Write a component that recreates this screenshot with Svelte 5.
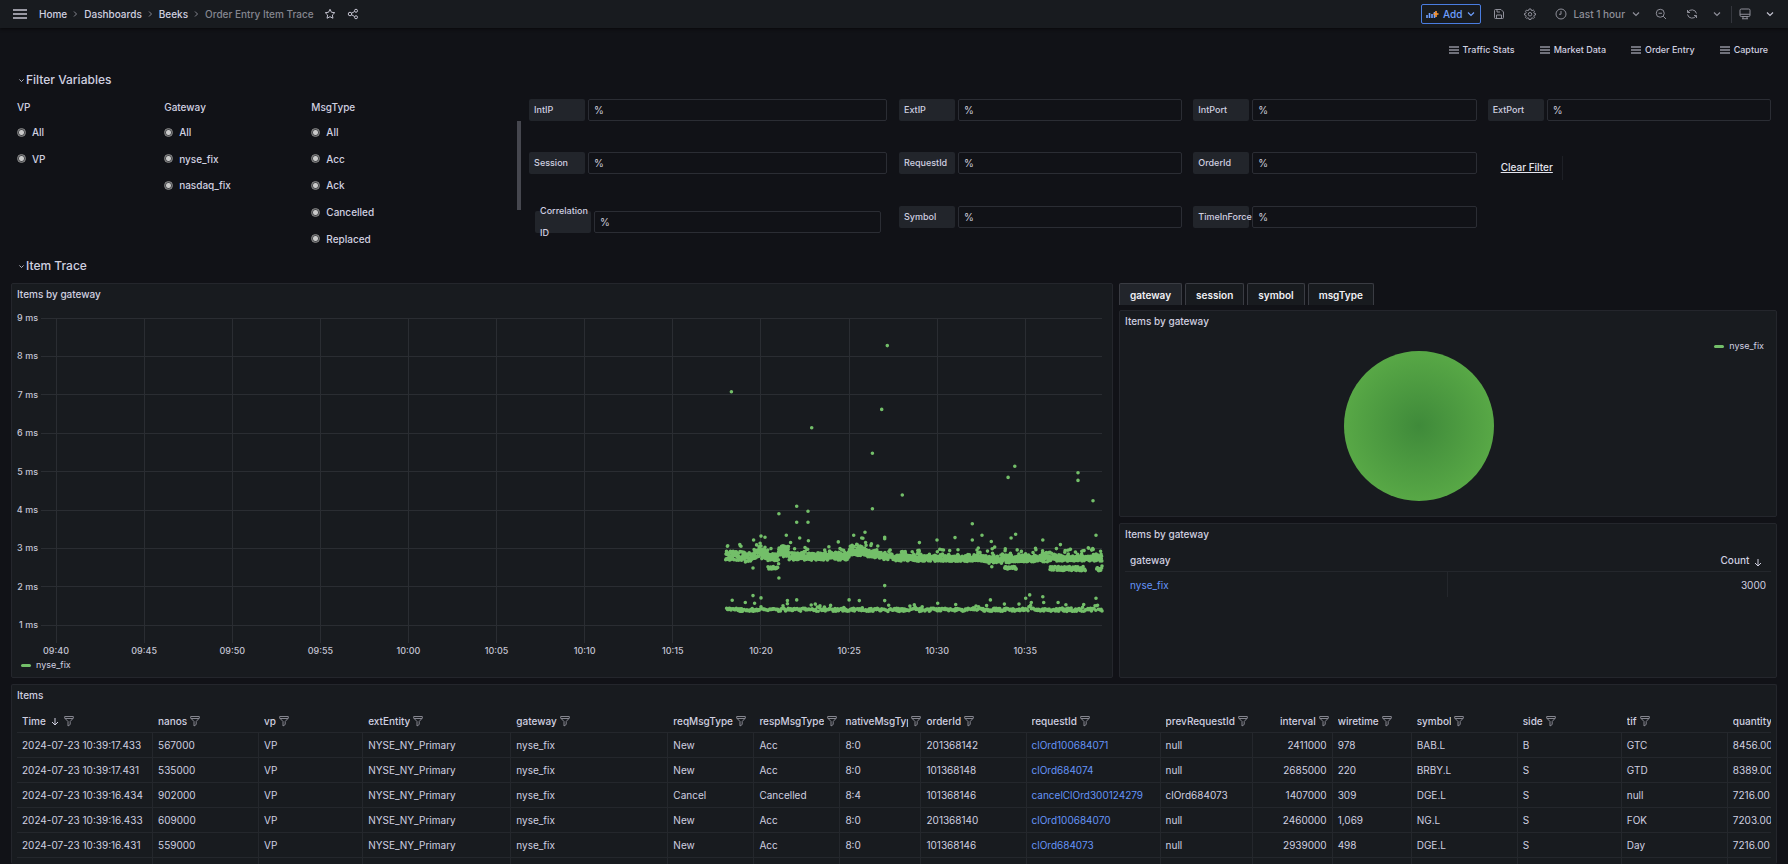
<script lang="ts">
  type Band = [from: number, to: number, low: number, high: number];
  type Point = [minute: number, ms: number];

  const crumbs = ['Home', 'Dashboards', 'Beeks'];
  const links = ['Traffic Stats', 'Market Data', 'Order Entry', 'Capture'];

  const radioGroups = [
    { title: 'VP', options: ['All', 'VP'] },
    { title: 'Gateway', options: ['All', 'nyse_fix', 'nasdaq_fix'] },
    { title: 'MsgType', options: ['All', 'Acc', 'Ack', 'Cancelled', 'Replaced'] }
  ];

  const fields = [
    'IntIP', 'ExtIP', 'IntPort', 'ExtPort',
    'Session', 'RequestId', 'OrderId', null,
    'Correlation ID', 'Symbol', 'TimeInForce'
  ];

  const tabs = ['gateway', 'session', 'symbol', 'msgType'];
  let activeTab = $state('gateway');

  const columns = [
    { name: 'Time', width: 136, sorted: true },
    { name: 'nanos', width: 106 },
    { name: 'vp', width: 104 },
    { name: 'extEntity', width: 148 },
    { name: 'gateway', width: 157 },
    { name: 'reqMsgType', width: 86 },
    { name: 'respMsgType', width: 86 },
    { name: 'nativeMsgType', width: 81 },
    { name: 'orderId', width: 105 },
    { name: 'requestId', width: 134, link: true },
    { name: 'prevRequestId', width: 92 },
    { name: 'interval', width: 80, right: true },
    { name: 'wiretime', width: 79 },
    { name: 'symbol', width: 106 },
    { name: 'side', width: 104 },
    { name: 'tif', width: 106 },
    { name: 'quantity', width: 43 }
  ];
  const totalWidth = columns.reduce((sum, c) => sum + c.width, 0);

  const rows = [
    ['2024-07-23 10:39:17.433', '567000', 'VP', 'NYSE_NY_Primary', 'nyse_fix', 'New', 'Acc', '8:0', '201368142', 'clOrd100684071', 'null', '2411000', '978', 'BAB.L', 'B', 'GTC', '8456.00'],
    ['2024-07-23 10:39:17.431', '535000', 'VP', 'NYSE_NY_Primary', 'nyse_fix', 'New', 'Acc', '8:0', '101368148', 'clOrd684074', 'null', '2685000', '220', 'BRBY.L', 'S', 'GTD', '8389.00'],
    ['2024-07-23 10:39:16.434', '902000', 'VP', 'NYSE_NY_Primary', 'nyse_fix', 'Cancel', 'Cancelled', '8:4', '101368146', 'cancelClOrd300124279', 'clOrd684073', '1407000', '309', 'DGE.L', 'S', 'null', '7216.00'],
    ['2024-07-23 10:39:16.433', '609000', 'VP', 'NYSE_NY_Primary', 'nyse_fix', 'New', 'Acc', '8:0', '201368140', 'clOrd100684070', 'null', '2460000', '1,069', 'NG.L', 'S', 'FOK', '7203.00'],
    ['2024-07-23 10:39:16.431', '559000', 'VP', 'NYSE_NY_Primary', 'nyse_fix', 'New', 'Acc', '8:0', '101368146', 'clOrd684073', 'null', '2939000', '498', 'DGE.L', 'S', 'Day', '7216.00']
  ];

  // Scatter chart. Minutes are counted from 09:40.
  const SPAN = 59.35;
  const xTicks = ['09:40', '09:45', '09:50', '09:55', '10:00', '10:05', '10:10', '10:15', '10:20', '10:25', '10:30', '10:35'];
  const yTicks = [9, 8, 7, 6, 5, 4, 3, 2, 1];

  const bands: Band[] = [
    [38.0, 39.1, 2.69, 2.93],
    [39.1, 39.5, 2.64, 2.9],
    [39.5, 40.4, 2.72, 2.98],
    [40.4, 41.0, 2.68, 2.86],
    [41.0, 41.6, 2.78, 3.06],
    [41.6, 45.0, 2.69, 2.89],
    [45.0, 46.0, 2.81, 3.07],
    [46.0, 46.7, 2.76, 2.95],
    [46.7, 47.5, 2.71, 2.86],
    [47.5, 52.8, 2.66, 2.82],
    [52.8, 54.3, 2.61, 2.83],
    [54.3, 56.4, 2.65, 2.83],
    [56.4, 59.35, 2.67, 2.8]
  ];
  const dips: Band[] = [
    [40.4, 40.97, 2.46, 2.53],
    [53.83, 54.5, 2.46, 2.53],
    [56.4, 58.4, 2.42, 2.53],
    [59.05, 59.35, 2.41, 2.55]
  ];
  const outliers: Point[] = [
    [38.32, 7.08], [47.17, 8.28], [46.85, 6.62], [42.88, 6.14], [46.32, 5.48], [54.4, 5.14],
    [54.02, 4.85], [57.99, 4.97], [57.99, 4.77], [58.84, 4.24], [48.02, 4.39], [46.32, 4.03],
    [42.03, 4.1], [42.67, 3.97], [41.02, 3.9], [42.03, 3.68], [42.67, 3.68], [51.99, 3.64],
    [45.9, 3.42], [45.26, 3.34], [41.44, 3.34], [42.2, 3.27], [40, 3.32], [40.23, 3.29],
    [39.58, 3.22], [47.02, 3.29], [47.02, 3.25], [49.99, 3.22], [48.99, 3.15], [51.01, 3.28],
    [52.54, 3.34], [51.99, 3.22], [53.07, 3.18], [54.45, 3.37], [54.19, 3.27], [55.99, 3.22],
    [56.99, 3.1], [59.01, 3.34], [38.11, 3.07], [44.39, 3.17], [42.69, 3.2], [39.55, 2.49],
    [41.02, 2.23], [41, 2.6], [53.1, 2.52], [47.02, 2.03], [47.02, 1.64], [38.37, 1.65],
    [39.55, 1.77], [40, 1.71], [39.11, 1.59], [39.64, 1.57], [41.5, 1.64], [41.5, 1.56],
    [42.03, 1.66], [43.08, 1.55], [45, 1.66], [45.58, 1.64], [50.03, 1.57], [51.05, 1.54],
    [53.02, 1.66], [53.81, 1.55], [54.64, 1.55], [55.02, 1.7], [55.25, 1.79], [55.99, 1.74],
    [55.34, 1.59], [56.04, 1.59], [56.86, 1.59], [58.31, 1.54], [59.01, 1.7]
  ];

  function buildPoints(): Point[] {
    let seed = 20240723;
    const random = () => {
      seed = (seed * 1664525 + 1013904223) % 4294967296;
      return seed / 4294967296;
    };
    const points: Point[] = [...outliers];
    for (const [from, to, low, high] of bands) {
      for (let m = from; m < to; m += 0.014) {
        const spike = random() < 0.2 ? random() * random() * 0.38 : 0;
        points.push([m, low + random() * (high - low) + spike]);
      }
    }
    for (const [from, to, low, high] of dips) {
      for (let m = from; m < to; m += 0.025) points.push([m, low + random() * (high - low)]);
    }
    for (let m = 38.05; m < SPAN; m += 0.05) {
      const spike = random() < 0.14 ? random() * 0.11 : 0;
      points.push([m, 1.36 + random() * 0.08 + spike]);
    }
    return points;
  }

  const points = buildPoints();

  let chartWidth = $state(1099);
  let right = $derived(chartWidth - 10);
  let step = $derived((right - 44) / SPAN);
  const px = (minute: number) => 44 + minute * step;
  const py = (ms: number) => 13 + (9 - ms) * 38.4;
  let dots = $derived(points.map(([m, v]) => `M${px(m).toFixed(1)} ${py(v).toFixed(1)}h0`).join(''));
</script>

{#snippet chevron()}
  <svg class="chev" viewBox="0 0 10 10" aria-hidden="true"><path d="M2 3.5 5 6.5 8 3.5" /></svg>
{/snippet}

{#snippet bars()}
  <svg class="bars" viewBox="0 0 10 8" aria-hidden="true"><path d="M0 1h10M0 4h10M0 7h10" /></svg>
{/snippet}

{#snippet arrowDown()}
  <svg class="arrow" viewBox="0 0 8 10" aria-hidden="true"><path d="M4 2v7M1 6l3 3 3-3" /></svg>
{/snippet}

{#snippet funnel()}
  <svg class="funnel" viewBox="0 0 10 12" aria-hidden="true">
    <path d="M.7 1.5h8.6v1.6L6.2 6.5v3L4 11V6.5L.7 3.1ZM.9 3.500h8.2" />
  </svg>
{/snippet}

<div class="app">
  <header class="nav">
    <button type="button" class="icon menu" aria-label="Menu">
      <svg viewBox="0 0 14 10"><path d="M0 1h14M0 5h14M0 9h14" /></svg>
    </button>
    <nav class="crumbs" aria-label="Breadcrumbs">
      {#each crumbs as crumb}
        <a href="#{crumb.toLowerCase()}">{crumb}</a>
        <svg class="sep" viewBox="0 0 5 8" aria-hidden="true"><path d="M1 1.5 3.5 4 1 6.5" /></svg>
      {/each}
      <span>Order Entry Item Trace</span>
    </nav>
    <button type="button" class="icon light" aria-label="Mark as favorite">
      <svg viewBox="0 0 24 24"><path d="m12 2.5 2.9 6 6.6.9-4.8 4.6 1.2 6.5-5.9-3.1-5.9 3.1L7.3 14 2.5 9.4l6.6-.9Z" /></svg>
    </button>
    <button type="button" class="icon light share" aria-label="Share dashboard">
      <svg viewBox="0 0 24 24">
        <circle cx="6" cy="12" r="3.5" /><circle cx="18" cy="5.5" r="3" /><circle cx="18" cy="18.5" r="3" />
        <path d="m9 10.5 6.2-3.5M9 13.5l6.2 3.5" />
      </svg>
    </button>

    <div class="tools">
      <button type="button" class="add">
        <svg class="add-icon" viewBox="0 0 13 10" aria-hidden="true">
          <path d="M1 9V6M3.5 9V4M6 9V5M8.5 9V3" /><path class="plus" d="M10 2v6M7.5 5h5" />
        </svg>
        Add {@render chevron()}
      </button>
      <button type="button" class="icon" aria-label="Save dashboard">
        <svg viewBox="0 0 24 24"><path d="M3 5a2 2 0 0 1 2-2h11l5 5v11a2 2 0 0 1-2 2H5a2 2 0 0 1-2-2ZM8 3v5h6M7 21v-7h10v7" /></svg>
      </button>
      <button type="button" class="icon" aria-label="Settings">
        <svg viewBox="0 0 24 24">
          <path d="M10 2h4l.6 2.7 1.600.7L18.600 4 21 6.400l-1.500 2.400.7 1.600L23 11v3l-2.800.6-.7 1.600L21 18.600 18.600 21l-2.400-1.500-1.600.7L14 23h-4l-.6-2.800-1.600-.7L5.400 21 3 18.600l1.500-2.400-.7-1.600L1 14v-3l2.800-.6.7-1.600L3 6.400 5.400 4l2.400 1.400 1.600-.7Z" />
          <circle cx="12" cy="12.5" r="3.5" />
        </svg>
      </button>
      <button type="button" class="range">
        <svg viewBox="0 0 24 24" aria-hidden="true"><circle cx="12" cy="12" r="10" /><path d="M12 6v6.500H8" /></svg>
        <span>Last 1 hour</span>
        {@render chevron()}
      </button>
      <button type="button" class="icon" aria-label="Zoom out">
        <svg viewBox="0 0 24 24"><circle cx="10.5" cy="10.5" r="8" /><path d="m16.5 16.5 5.5 5.5M7 10.5h7" /></svg>
      </button>
      <button type="button" class="icon" aria-label="Refresh">
        <svg viewBox="0 0 24 24"><path d="M3 4v5h5M3.5 9A9.3 9.3 0 0 1 21 11M21 20v-5h-5M20.5 15A9.3 9.3 0 0 1 3 13" /></svg>
      </button>
      <button type="button" class="icon small" aria-label="Refresh interval">{@render chevron()}</button>
      <span class="divider"></span>
      <button type="button" class="icon" aria-label="View mode">
        <svg viewBox="0 0 24 24"><rect x="2" y="2" width="20" height="15" rx="2.5" /><path d="M2 12.5h20M8 17v4.5M16 17v4.5M6 21.5h12" /></svg>
      </button>
      <button type="button" class="icon light last" aria-label="Toggle top bar">{@render chevron()}</button>
    </div>
  </header>

  <main>
    <nav class="links" aria-label="Dashboard links">
      {#each links as link}
        <a href="#{link.toLowerCase().replace(' ', '-')}">{@render bars()}{link}</a>
      {/each}
    </nav>

    <h2>{@render chevron()}Filter Variables</h2>

    <section class="filters">
      {#each radioGroups as group}
        <fieldset class:scroll={group.title === 'MsgType'}>
          <legend>{group.title}</legend>
          <div class="radios">
            {#each group.options as option}
              <label><input type="radio" name="{group.title}-{option}" checked />{option}</label>
            {/each}
          </div>
        </fieldset>
      {/each}
      <div class="fields">
        {#each fields as field}
          {#if field}
            <div class="field" class:inset={field === 'Correlation ID'}>
              <label for="var-{field}">{field}</label>
              <input id="var-{field}" type="text" value="%" />
            </div>
          {:else}
            <div class="clear"><a href="#clear">Clear Filter</a></div>
          {/if}
        {/each}
      </div>
    </section>

    <h2>{@render chevron()}Item Trace</h2>

    <div class="trace">
      <section class="panel chart">
        <h3>Items by gateway</h3>
        <div bind:clientWidth={chartWidth}>
          <svg class="plot" width={chartWidth} height="352" role="img" aria-label="Items by gateway">
            {#each yTicks as tick}
              <line x1="29" x2={right} y1={py(tick)} y2={py(tick)} />
              <text x="26" y={py(tick) + 3} text-anchor="end">{tick} ms</text>
            {/each}
            {#each xTicks as tick, i}
              <line x1={px(i * 5)} x2={px(i * 5)} y1="13" y2="338" />
              <text x={px(i * 5)} y="349" text-anchor="middle">{tick}</text>
            {/each}
            <path class="dots" d={dots} />
          </svg>
        </div>
        <p class="legend"><i></i>nyse_fix</p>
      </section>

      <div class="side">
        <div class="tabs" role="tablist">
          {#each tabs as tab}
            <button
              type="button"
              role="tab"
              aria-selected={activeTab === tab}
              class:active={activeTab === tab}
              onclick={() => (activeTab = tab)}
            >{tab}</button>
          {/each}
        </div>
        <section class="panel pie-panel">
          <h3>Items by gateway</h3>
          <div class="pie-row">
            <div class="pie"></div>
            <p class="legend"><i></i>nyse_fix</p>
          </div>
        </section>
        <section class="panel">
          <h3>Items by gateway</h3>
          <div class="table-wrap">
            <table class="counts">
              <thead>
                <tr><th>gateway</th><th class="right">Count {@render arrowDown()}</th></tr>
              </thead>
              <tbody>
                <tr><td><a href="#nyse_fix">nyse_fix</a></td><td class="right">3000</td></tr>
              </tbody>
            </table>
          </div>
        </section>
      </div>
    </div>

    <section class="panel items">
      <h3>Items</h3>
      <div class="table-wrap">
        <table>
          <colgroup>
            {#each columns as column}
              <col style={`width:${(column.width / totalWidth) * 100}%`} />
            {/each}
          </colgroup>
          <thead>
            <tr>
              {#each columns as column}
                <th>
                  <div class="head" class:end={column.right}>
                    <span>{column.name}</span>
                    {#if column.sorted}{@render arrowDown()}{/if}
                    {@render funnel()}
                  </div>
                </th>
              {/each}
            </tr>
          </thead>
          <tbody>
            {#each rows as row}
              <tr>
                {#each row as cell, i}
                  <td class:right={columns[i].right}>
                    {#if columns[i].link}<a href="#{cell}">{cell}</a>{:else}{cell}{/if}
                  </td>
                {/each}
              </tr>
            {/each}
            <tr>
              {#each columns as _}<td></td>{/each}
            </tr>
          </tbody>
        </table>
      </div>
    </section>
  </main>
</div>

<style>
  :global(body) {
    background: #111217;
  }

  .app {
    height: 100vh;
    display: flex;
    flex-direction: column;
    overflow: hidden;
    background: #111217;
    color: #d0d0e0;
    font-family: Inter, 'Liberation Sans', sans-serif;
    font-size: 10px;
    line-height: 16px;
  }

  .app * {
    box-sizing: border-box;
  }

  svg {
    flex: none;
    fill: none;
    stroke: currentColor;
  }

  button {
    font: inherit;
    color: inherit;
    background: none;
    border: none;
    padding: 0;
  }

  a {
    color: inherit;
    text-decoration: none;
  }

  h2,
  h3,
  p {
    margin: 0;
  }

  .chev {
    width: 10px;
    height: 10px;
    stroke-width: 1.2;
  }

  /* top bar */
  .nav {
    flex: none;
    height: 28px;
    display: flex;
    align-items: center;
    padding: 0 13px;
    background: #181b1f;
    box-shadow: 0 1px 3px #08090b;
    font-weight: 500;
  }

  .icon {
    display: flex;
    color: #8e8f99;
  }

  .icon svg,
  .range svg {
    width: 12px;
    height: 12px;
    stroke-width: 2;
  }

  .icon .chev,
  .range .chev {
    width: 10px;
    height: 10px;
    stroke-width: 1.2;
  }

  .light,
  .menu {
    color: #c3c3d0;
  }

  .menu svg {
    width: 14px;
    height: 10px;
    stroke-width: 1.4;
  }

  .crumbs {
    display: flex;
    align-items: center;
    gap: 6px;
    margin: 0 10px 0 12px;
  }

  .crumbs span {
    color: #85868f;
  }

  .sep {
    width: 5px;
    height: 8px;
    color: #85868f;
  }

  .share {
    margin-left: 11px;
  }

  .tools {
    margin-left: auto;
    display: flex;
    align-items: center;
    gap: 19px;
  }

  .add {
    height: 20px;
    display: flex;
    align-items: center;
    gap: 4px;
    padding: 0 4px;
    margin-right: -7px;
    border: 1px solid #4a7de0;
    border-radius: 2px;
    color: #6e9fff;
  }

  .add-icon {
    width: 13px;
    height: 10px;
    stroke-width: 1.6;
  }

  .plus {
    stroke: #ff9830;
  }

  .range {
    display: flex;
    align-items: center;
    gap: 6px;
    margin-right: -5px;
    color: #8e8f99;
  }

  .small {
    margin: 0 -10px 0 -5px;
  }

  .divider {
    width: 1px;
    height: 17px;
    margin-right: -12px;
    background: #34363d;
  }

  .last {
    margin-left: -5px;
  }

  /* page */
  main {
    flex: 1;
    min-height: 0;
    display: flex;
    flex-direction: column;
    padding: 14px 11px 0;
  }

  .links {
    display: flex;
    justify-content: flex-end;
    gap: 25px;
    padding-right: 9px;
    font-size: 9px;
    font-weight: 500;
  }

  .links a {
    display: flex;
    align-items: center;
    gap: 4px;
  }

  .bars {
    width: 10px;
    height: 8px;
  }

  h2 {
    display: flex;
    align-items: center;
    gap: 1px;
    height: 24px;
    padding-left: 7px;
    font-size: 12px;
    font-weight: 500;
  }

  h2 .chev {
    width: 7px;
    height: 7px;
  }

  .links + h2 {
    margin-top: 10px;
  }

  .filters {
    display: grid;
    grid-template-columns: 2fr 2fr 3fr 17fr;
    height: 162px;
    padding-top: 7px;
  }

  fieldset {
    min-width: 0;
    margin: 0;
    padding: 0 6px;
    border: none;
  }

  /* resting scrollbar thumb of the radio area */
  .scroll {
    background: linear-gradient(#46474f, #46474f) no-repeat right 5px top 14px / 4px 89px;
  }

  legend {
    padding: 0;
    font-weight: 500;
  }

  .radios {
    display: grid;
    grid-template-rows: repeat(5, 1fr);
    height: 133px;
    padding-top: 4px;
    box-sizing: content-box;
  }

  .radios label {
    display: flex;
    align-items: center;
    gap: 6px;
    font-weight: 500;
  }

  .radios input {
    appearance: none;
    width: 9px;
    height: 9px;
    margin: 0;
    border: 1px solid #8a8a8a;
    border-radius: 50%;
    background: radial-gradient(circle, #cacaca 2px, #47484c 3px);
  }

  .fields {
    display: grid;
    grid-template-columns: 5fr 4fr 4fr 4fr;
    grid-template-rows: repeat(3, 1fr);
    height: 160px;
  }

  .field {
    display: flex;
    align-items: flex-start;
    gap: 3px;
    padding: 0 6px 0 5px;
  }

  .field:nth-child(4n + 1) {
    padding: 0 7px 0 3px;
  }

  .field.inset {
    padding: 5px 13px 0 9px;
  }

  .field label {
    flex: none;
    display: flex;
    align-items: center;
    width: 56px;
    height: 22px;
    padding-left: 5px;
    border-radius: 2px;
    background: #22252b;
    font-size: 9px;
    line-height: 22px;
    font-weight: 500;
  }

  .field input {
    flex: 1;
    min-width: 0;
    height: 22px;
    padding: 0 5px;
    border: 1px solid #2b2d34;
    border-radius: 2px;
    background: #111217;
    color: #ccccdc;
    font: inherit;
  }

  .clear {
    justify-self: start;
    height: 24px;
    margin-top: 4px;
    padding: 3px 9px 0 18px;
    border-right: 1px solid #1e2026;
  }

  .clear a {
    color: #e4e4ee;
    font-weight: 500;
    text-decoration: underline;
  }

  /* panels */
  .panel {
    border: 1px solid #24262c;
    border-radius: 2px;
    background: #181b1f;
    overflow: hidden;
  }

  h3 {
    padding: 2px 5px 3px;
    font-size: 10px;
    font-weight: 500;
  }

  .trace {
    display: grid;
    grid-template-columns: 67fr 40fr;
    gap: 6px;
    margin-top: 5px;
  }

  .chart {
    height: 395px;
  }

  .plot {
    display: block;
  }

  .plot line {
    stroke: #2a2d32;
    shape-rendering: crispEdges;
  }

  .plot text {
    fill: #c4c4d3;
    stroke: none;
    font-size: 9px;
    font-weight: 500;
  }

  .dots {
    stroke: #73bf69;
    stroke-width: 3.6;
    stroke-linecap: round;
  }

  .legend {
    display: flex;
    align-items: center;
    gap: 5px;
    padding: 0 9px;
    font-size: 9px;
  }

  .legend i {
    width: 10px;
    height: 3px;
    border-radius: 2px;
    background: #73bf69;
  }

  .side {
    display: flex;
    flex-direction: column;
    gap: 6px;
    min-width: 0;
  }

  .side .panel:last-child {
    flex: 1;
  }

  .tabs {
    display: flex;
    gap: 3px;
    margin-bottom: -1px;
  }

  .tabs button {
    height: 22px;
    padding: 0 10px;
    border: 1px solid #3a3c43;
    border-bottom: none;
    border-radius: 2px 2px 0 0;
    background: #181b1f;
    color: #f0f0f4;
    font-weight: 600;
  }

  .tabs .active {
    background: #22252b;
  }

  .pie-panel {
    height: 207px;
  }

  .pie-row {
    display: grid;
    grid-template-columns: 1fr auto;
    align-items: start;
    padding: 6px 3px 0 0;
  }

  .pie {
    width: 150px;
    height: 150px;
    margin: 13px 0 0 12px;
    justify-self: center;
    border-radius: 50%;
    background: radial-gradient(circle closest-side, #3f8a3a, #58a846);
  }

  /* tables */
  .table-wrap {
    padding: 0 5px;
  }

  table {
    width: 100%;
    table-layout: fixed;
    border-collapse: separate;
    border-spacing: 0;
  }

  th,
  td {
    height: 25px;
    padding: 0 5px;
    border-bottom: 1px solid #24272c;
    text-align: left;
    font-weight: 400;
    white-space: nowrap;
    overflow: hidden;
  }

  td {
    border-right: 1px solid #24272c;
  }

  td:last-child {
    border-right: none;
    padding-right: 0;
  }

  th {
    height: 27px;
    padding: 4px 0 0 5px;
    font-weight: 500;
  }

  td a {
    color: #6594f8;
  }

  .right {
    text-align: right;
  }

  .counts td {
    border-bottom: none;
  }

  .counts td:last-child {
    padding-right: 5px;
  }

  .counts th.right {
    padding-right: 9px;
  }

  .arrow {
    width: 8px;
    height: 10px;
    margin: 0 2px;
    vertical-align: -3px;
  }

  .counts .arrow {
    margin-right: 0;
  }

  .head {
    display: flex;
    align-items: center;
    gap: 3px;
  }

  .head span {
    overflow: hidden;
  }

  th:last-child .head span {
    flex: none;
  }

  .head.end {
    justify-content: flex-end;
    padding-right: 4px;
  }

  .funnel {
    width: 10px;
    height: 12px;
    color: #85868f;
  }

  .items {
    flex: 1;
    min-height: 0;
    margin-top: 6px;
    border-bottom: none;
  }
</style>
